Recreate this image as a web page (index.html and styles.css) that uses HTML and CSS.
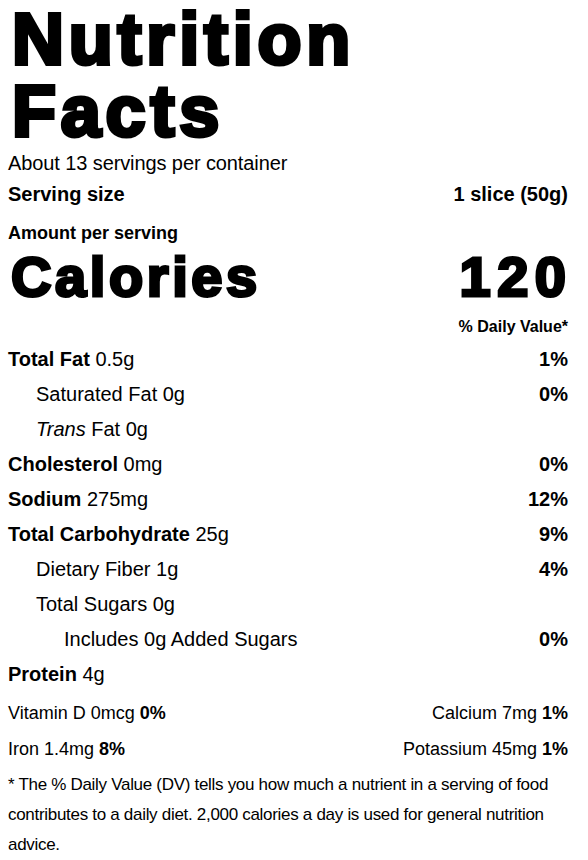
FILE: index.html
```html
<!DOCTYPE html>
<html lang="en">
<head>
<meta charset="utf-8">
<title>Nutrition Facts</title>
<link rel="stylesheet" href="styles.css">
</head>
<body>
<section class="label">
  <h1 class="title">Nutrition<br>Facts</h1>
  <p class="servings">About 13 servings per container</p>
  <div class="row serving-size"><span>Serving size</span><span>1 slice (50g)</span></div>
  <p class="amount">Amount per serving</p>
  <div class="row calories"><span class="cal-label">Calories</span><span class="cal-value">120</span></div>
  <p class="dv-head">% Daily Value*</p>
  <ul class="nutrients">
    <li class="row"><span><b>Total Fat</b> 0.5g</span><b>1%</b></li>
    <li class="row indent1"><span>Saturated Fat 0g</span><b>0%</b></li>
    <li class="row indent1"><span><i>Trans</i> Fat 0g</span></li>
    <li class="row"><span><b>Cholesterol</b> 0mg</span><b>0%</b></li>
    <li class="row"><span><b>Sodium</b> 275mg</span><b>12%</b></li>
    <li class="row"><span><b>Total Carbohydrate</b> 25g</span><b>9%</b></li>
    <li class="row indent1"><span>Dietary Fiber 1g</span><b>4%</b></li>
    <li class="row indent1"><span>Total Sugars 0g</span></li>
    <li class="row indent2"><span>Includes 0g Added Sugars</span><b>0%</b></li>
    <li class="row"><span><b>Protein</b> 4g</span></li>
  </ul>
  <ul class="vitamins">
    <li class="row"><span>Vitamin D 0mcg <b>0%</b></span><span>Calcium 7mg <b>1%</b></span></li>
    <li class="row"><span>Iron 1.4mg <b>8%</b></span><span>Potassium 45mg <b>1%</b></span></li>
  </ul>
  <p class="footnote">* The % Daily Value (DV) tells you how much a nutrient in a serving of food contributes to a daily diet. 2,000 calories a day is used for general nutrition advice.</p>
</section>
</body>
</html>
```
FILE: styles.css
```css
html, body {
  margin: 0;
  padding: 0;
  background: #fff;
}

body {
  font-family: "Liberation Sans", Arial, sans-serif;
  color: #000;
}

.label {
  width: 560px;
  margin-left: 8px;
  display: flex;
  flex-direction: column;
}

.title {
  margin: 3px 0 0 0;
  font-size: 72px;
  line-height: 72px;
  font-weight: 700;
  letter-spacing: 4.8px;
  -webkit-text-stroke: 4px #000;
  padding-left: 4px;
}

.servings {
  margin: 4px 0 0 0;
  font-size: 20px;
  line-height: 24px;
  letter-spacing: -0.1px;
}

.row {
  display: flex;
  justify-content: space-between;
  align-items: baseline;
}

.serving-size {
  margin-top: 4px;
  font-size: 20px;
  line-height: 30px;
  font-weight: 700;
}

.amount {
  margin: 10px 0 0 0;
  font-size: 18px;
  line-height: 28px;
  font-weight: 700;
}

.calories {
  margin-top: 2px;
  font-size: 56px;
  line-height: 56px;
  font-weight: 700;
  -webkit-text-stroke: 3px #000;
}

.cal-label {
  letter-spacing: 3.6px;
  padding-left: 3px;
}

.cal-value {
  letter-spacing: 6.5px;
  margin-right: -4.5px;
}

.dv-head {
  margin: 10px 0 0 0;
  font-size: 16px;
  line-height: 24px;
  font-weight: 700;
  text-align: right;
}

.nutrients,
.vitamins {
  list-style: none;
  margin: 3px 0 0 0;
  padding: 0;
}

.nutrients .row {
  font-size: 20px;
  line-height: 35px;
}

.indent1 {
  padding-left: 28px;
}

.indent2 {
  padding-left: 56px;
}

.vitamins .row {
  font-size: 18px;
  line-height: 36px;
}

.footnote {
  margin: 3px 0 0 0;
  font-size: 17px;
  line-height: 30px;
  letter-spacing: -0.3px;
}
```
